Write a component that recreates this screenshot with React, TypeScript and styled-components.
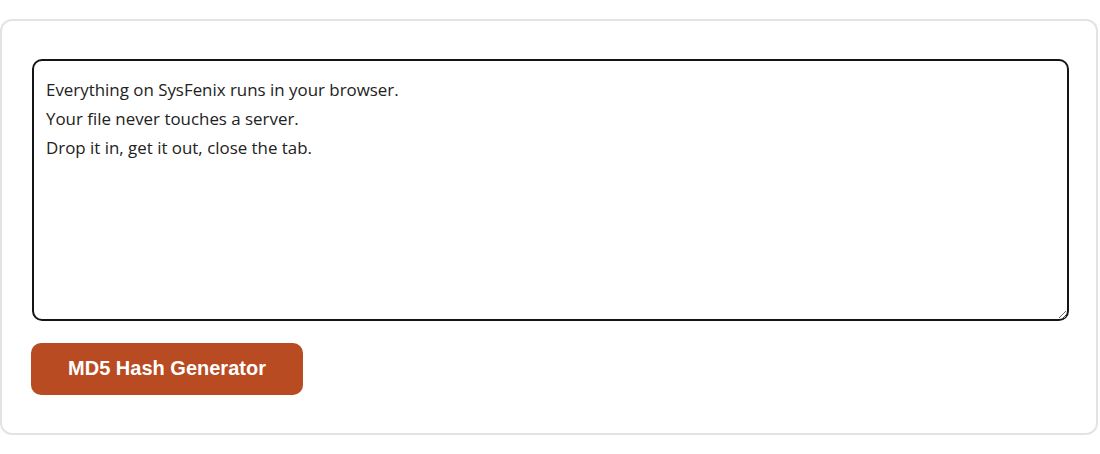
import React, { useState } from "react";
import styled, { createGlobalStyle } from "styled-components";

const GlobalStyle = createGlobalStyle`
  html, body {
    margin: 0;
    padding: 0;
    background: #fff;
  }
`;

const Page = styled.div`
  padding: 19px 2px 0 0;
`;

const Card = styled.div`
  display: flex;
  flex-direction: column;
  align-items: flex-start;
  gap: 22px;
  padding: 38px 28px 38px 29px;
  border: 2px solid #e1e4e6;
  border-radius: 12px;
  background: #fff;
`;

const TextBox = styled.textarea`
  box-sizing: border-box;
  width: 100%;
  height: 262px;
  margin-left: 1px;
  padding: 14px 12px 12px;
  border: 2px solid #151515;
  border-radius: 10px;
  font-family: "Open Sans", "Noto Sans", sans-serif;
  font-size: 16.9px;
  line-height: 29px;
  color: #222;
  resize: vertical;
  outline: none;
`;

const Button = styled.button`
  width: 272px;
  height: 52px;
  padding-bottom: 2px;
  border: none;
  border-radius: 10px;
  background: #b84b22;
  color: #fff;
  font-family: "Liberation Sans", Arial, sans-serif;
  font-weight: bold;
  font-size: 20px;
  cursor: pointer;
`;

const initialText = `Everything on SysFenix runs in your browser.
Your file never touches a server.
Drop it in, get it out, close the tab.`;

export default function App() {
  const [text, setText] = useState(initialText);
  return (
    <Page>
      <GlobalStyle />
      <Card>
        <TextBox value={text} onChange={e => setText(e.target.value)} />
        <Button>MD5 Hash Generator</Button>
      </Card>
    </Page>
  );
}
